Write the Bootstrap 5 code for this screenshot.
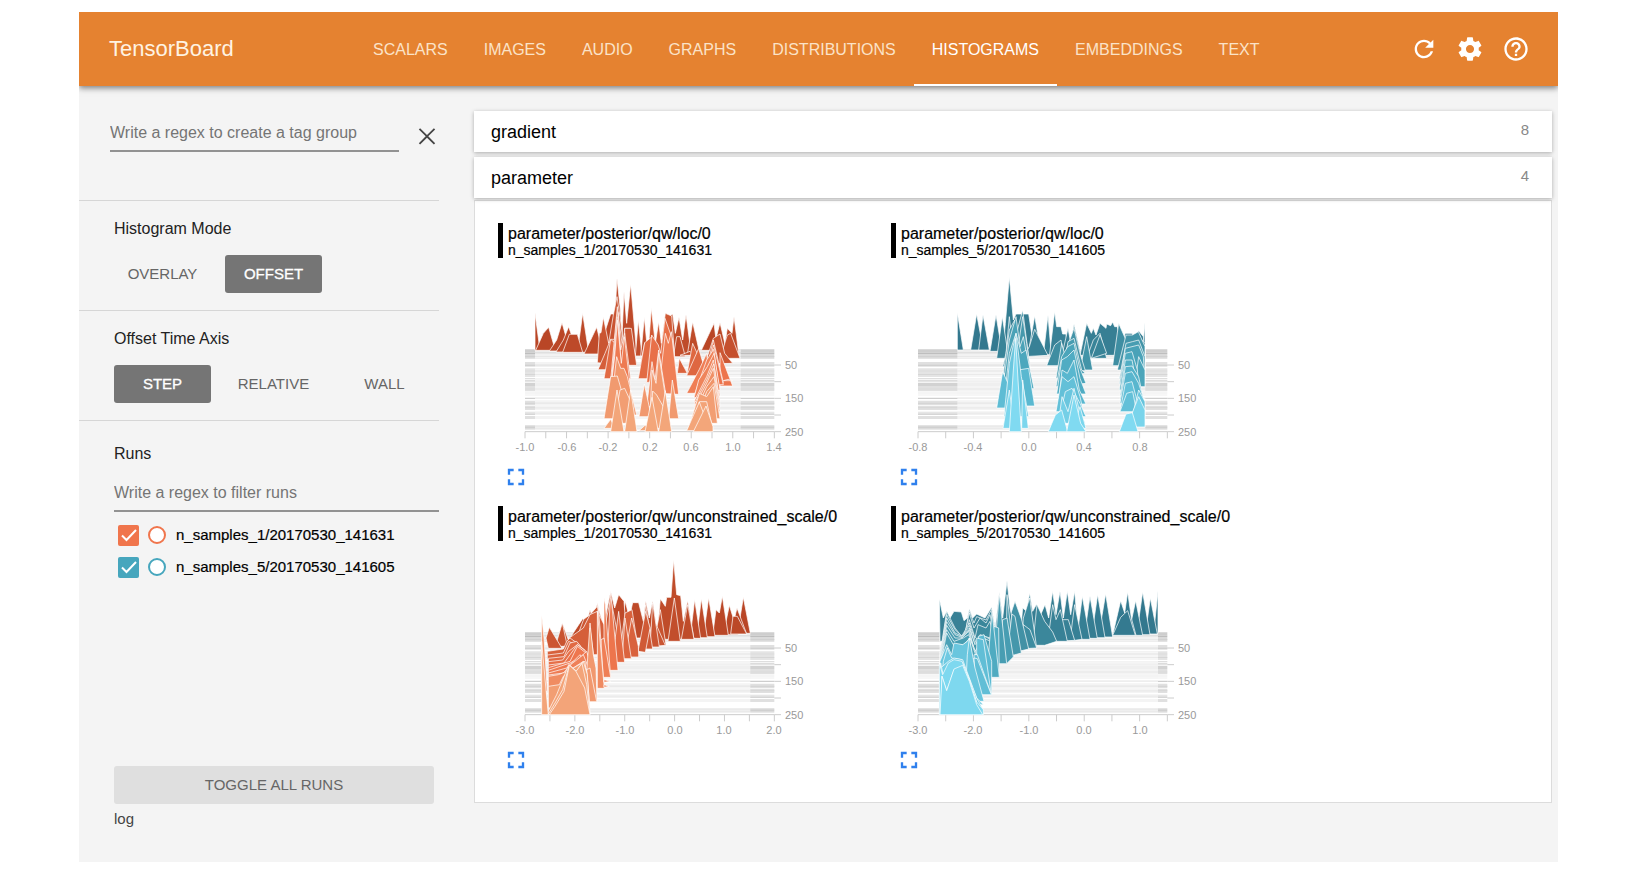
<!DOCTYPE html>
<html lang="en">
<head>
<meta charset="utf-8">
<meta name="viewport" content="width=device-width, initial-scale=1">
<title>TensorBoard</title>
<link href="https://cdn.jsdelivr.net/npm/bootstrap@5.3.0/dist/css/bootstrap.min.css" rel="stylesheet">
<style>
  body { font-family: "Liberation Sans", Arial, sans-serif; font-size: 16px; line-height: 24px; color: #222; background: #fff; padding: 12px 78px 14px 79px; }
  .app { min-height: calc(100vh - 26px); background: #f4f4f4; overflow: hidden; }
  .topbar { background: #e58230; min-height: 74px; padding: 0 28px 0 30px; box-shadow: 0 2px 6px rgba(0,0,0,.5); z-index: 2; }
  .topbar .brand { font-size: 22px; color: #fff3e2; width: 246px; text-decoration: none; }
  .tabs .nav-link { color: #fbe3c8; padding: 0 18px; height: 74px; line-height: 76px; border-radius: 0; }
  .tabs .nav-link.active { color: #fff; box-shadow: inset 0 -2px #fff; }
  .tools { gap: 18px; }
  .icon-btn { border: 0; padding: 0; background: none; color: #fff; line-height: 0; flex: none; }
  .icon-btn svg { width: 28px; height: 28px; fill: currentColor; }
  .side { width: 360px; flex: none; }
  .side section { border-bottom: 1px solid #d6d6d6; padding: 16px 0 17px 35px; }
  .side .tag-search { padding: 28px 0 48px 31px; }
  .side section.runs { border: 0; padding-top: 21px; }
  .side h2 { font-size: 16px; line-height: 24px; margin: 0; font-weight: 400; }
  .line-input { border: 0; border-bottom: 2px solid #929292; border-radius: 0; background: none; padding: 2px 0 0; height: 38px; width: 100%; color: #222; }
  .line-input::placeholder { color: #757575; opacity: 1; }
  .tag-search .line-input { width: 289px; flex: none; }
  .tag-search .icon-btn { color: #444; margin: 8px 0 0 14px; }
  .runs .line-input { margin: 8px 0 7px; }
  .modes { gap: 14px; margin-top: 14px; }
  .mode { width: 97px; height: 38px; padding: 0; font-size: 15px; color: #666; border-radius: 3px; border: 0; }
  .mode.active, .mode.active:hover { background: #757575 !important; color: #fff !important; -webkit-text-stroke: .3px #fff; }
  .run { height: 32px; padding-left: 4px; font-size: 15px; color: #000; }
  .run input { appearance: none; margin: 0; flex: none; }
  .run input[type=checkbox] { width: 21px; height: 21px; border-radius: 2px; background: var(--run) url("data:image/svg+xml,%3Csvg xmlns='http://www.w3.org/2000/svg' viewBox='0 0 21 21'%3E%3Cpath d='M4 10.500l4.500 4.500L18 5' fill='none' stroke='white' stroke-width='2'/%3E%3C/svg%3E") center / 21px; }
  .run input[type=radio] { width: 18px; height: 18px; border: 2px solid var(--run); border-radius: 50%; background: #fff; margin: 0 10px 0 9px; }
  .run label { -webkit-text-stroke: .2px #000; }
  .side-foot { padding: 0 5px 28px 35px; font-size: 15px; }
  .toggle-all { background: #dfdfdf; color: #666; border: 0; border-radius: 3px; height: 38px; padding: 0; font-size: 15px; }
  .side-foot div { line-height: 30px; color: #444; }
  .board { padding: 25px 6px 58px 35px; }
  .category { height: 41px; border: 0; background: #fff; color: #000; font-size: 18px; padding: 0 23px 0 17px; box-shadow: 0 1px 4px rgba(0,0,0,.3); }
  .category + .category { margin-top: 5px; }
  .category small { font-size: 15px; color: #888; padding-bottom: 4px; }
  .panel { background: #fff; border: 1px solid #dcdcdc; margin-top: 2px; padding: 22px 0 0 23px; min-height: 603px; }
  .plots { row-gap: 15px; }
  .plot-item { width: 393px; height: 268px; }
  .plot-head { border-left: 5px solid #000; height: 35px; padding: 2px 0 0 5px; color: #000; font-size: 16px; line-height: 17px; white-space: nowrap; }
  .plot-head div { -webkit-text-stroke: .2px #000; }
  .plot-head div + div { font-size: 14px; line-height: 16px; }
  .plot { display: block; width: 330px; height: 190px; margin-top: 10px; font-size: 11px; fill: #999; }
  .expand { color: #2f80ed; margin-left: 4px; margin-top: 5px; }
</style>
</head>
<body>
<div class="app d-flex flex-column">
  <header class="topbar d-flex align-items-center position-relative">
    <a class="brand" href="#">TensorBoard</a>
    <nav class="nav tabs flex-nowrap">
      <a class="nav-link" href="#">SCALARS</a>
      <a class="nav-link" href="#">IMAGES</a>
      <a class="nav-link" href="#">AUDIO</a>
      <a class="nav-link" href="#">GRAPHS</a>
      <a class="nav-link" href="#">DISTRIBUTIONS</a>
      <a class="nav-link active" href="#" aria-current="page">HISTOGRAMS</a>
      <a class="nav-link" href="#">EMBEDDINGS</a>
      <a class="nav-link" href="#">TEXT</a>
    </nav>
    <div class="tools d-flex ms-auto">
      <button class="icon-btn" type="button" aria-label="Refresh"><svg viewBox="0 0 24 24"><path d="M17.65 6.35C16.2 4.9 14.21 4 12 4c-4.420 0-7.990 3.580-7.990 8s3.570 8 7.990 8c3.730 0 6.840-2.550 7.730-6h-2.080c-.82 2.330-3.040 4-5.650 4-3.310 0-6-2.690-6-6s2.690-6 6-6c1.660 0 3.140.69 4.220 1.780L13 11h7V4l-2.350 2.350z"/></svg></button>
      <button class="icon-btn" type="button" aria-label="Settings"><svg viewBox="0 0 24 24"><path d="M19.430 12.980c.04-.32.07-.64.07-.98s-.03-.66-.07-.98l2.110-1.650c.19-.15.24-.42.12-.64l-2-3.460c-.12-.22-.39-.3-.61-.22l-2.490 1c-.52-.4-1.080-.73-1.690-.98l-.38-2.650C14.460 2.180 14.250 2 14 2h-4c-.25 0-.46.18-.49.42l-.38 2.650c-.61.25-1.170.59-1.690.98l-2.490-1c-.23-.09-.49 0-.61.22l-2 3.460c-.13.22-.07.49.12.64l2.110 1.650c-.04.32-.07.65-.07.98s.03.66.07.98l-2.110 1.650c-.19.15-.24.42-.12.64l2 3.460c.12.22.39.3.61.22l2.490-1c.52.4 1.080.73 1.690.98l.38 2.650c.03.24.24.42.49.42h4c.25 0 .46-.18.49-.42l.38-2.650c.61-.25 1.170-.59 1.690-.98l2.490 1c.23.09.49 0 .61-.22l2-3.460c.12-.22.07-.49-.12-.64l-2.110-1.650zM12 15.500c-1.930 0-3.500-1.570-3.500-3.500s1.570-3.500 3.500-3.500 3.500 1.570 3.500 3.500-1.570 3.500-3.500 3.500z"/></svg></button>
      <button class="icon-btn" type="button" aria-label="Help"><svg viewBox="0 0 24 24"><path d="M11 18h2v-2h-2v2zm1-16C6.480 2 2 6.480 2 12s4.480 10 10 10 10-4.480 10-10S17.520 2 12 2zm0 18c-4.410 0-8-3.590-8-8s3.590-8 8-8 8 3.590 8 8-3.590 8-8 8zm0-14c-2.210 0-4 1.790-4 4h2c0-1.100.9-2 2-2s2 .9 2 2c0 2-3 1.750-3 5h2c0-2.250 3-2.500 3-5 0-2.210-1.790-4-4-4z"/></svg></button>
    </div>
  </header>

  <div class="d-flex flex-grow-1">
    <aside class="side d-flex flex-column">
      <section class="tag-search d-flex align-items-start">
        <input class="line-input" type="text" placeholder="Write a regex to create a tag group" aria-label="Write a regex to create a tag group">
        <button class="icon-btn" type="button" aria-label="Clear"><svg viewBox="0 0 24 24"><path d="M19 6.410L17.900 5.300 12 11.200 6.100 5.300 5 6.410 10.900 12.300 5 18.200l1.100 1.100 5.900-5.900 5.900 5.900L19 18.200l-5.900-5.900z"/></svg></button>
      </section>
      <section>
        <h2>Histogram Mode</h2>
        <div class="modes d-flex">
          <button class="btn mode" type="button">OVERLAY</button>
          <button class="btn mode active" type="button">OFFSET</button>
        </div>
      </section>
      <section>
        <h2>Offset Time Axis</h2>
        <div class="modes d-flex">
          <button class="btn mode active" type="button">STEP</button>
          <button class="btn mode" type="button">RELATIVE</button>
          <button class="btn mode" type="button">WALL</button>
        </div>
      </section>
      <section class="runs">
        <h2>Runs</h2>
        <input class="line-input" type="text" placeholder="Write a regex to filter runs" aria-label="Write a regex to filter runs">
        <div class="run d-flex align-items-center" style="--run:#f0754c">
          <input type="checkbox" id="run1" checked><input type="radio" name="only" aria-label="Show only n_samples_1"><label for="run1">n_samples_1/20170530_141631</label>
        </div>
        <div class="run d-flex align-items-center" style="--run:#46a6bd">
          <input type="checkbox" id="run5" checked><input type="radio" name="only" aria-label="Show only n_samples_5"><label for="run5">n_samples_5/20170530_141605</label>
        </div>
      </section>
      <div class="side-foot mt-auto">
        <button class="toggle-all btn w-100" type="button">TOGGLE ALL RUNS</button>
        <div>log</div>
      </div>
    </aside>

    <main class="board flex-grow-1">
      <button class="category w-100 d-flex align-items-center justify-content-between" type="button"><span>gradient</span><small>8</small></button>
      <button class="category w-100 d-flex align-items-center justify-content-between position-relative" type="button"><span>parameter</span><small>4</small></button>
      <div class="panel">
        <div class="plots d-flex flex-wrap" id="plots"></div>
      </div>
    </main>
  </div>
</div>

<script src="https://cdn.jsdelivr.net/npm/bootstrap@5.3.0/dist/js/bootstrap.bundle.min.js"></script>
<script>
// Colour ramps from the oldest step (back) to the newest (front).
const ORANGE = [[420,185,70,38],[470,208,90,54],[530,238,118,78],[600,240,146,104],[665,243,166,122]];
const TEAL = [[420,51,120,142],[450,58,134,154],[490,70,152,172],[540,76,168,190],[590,92,186,210],[625,108,200,224],[665,128,218,241]];

// Each ridge is "baseline: x,y x,y ...". Units are thirds of a pixel.
const charts = [
  { title: 'parameter/posterior/qw/loc/0', run: 'n_samples_1/20170530_141631', ramp: ORANGE, x0: 24, y0: 174, data: [135, 752],
    ticks: 12, labels: ['-1.0','-0.6','-0.2','0.2','0.6','1.0','1.4'], ridges: `
421: 135,421 135,310 150,421
421: 137,421 160,370 176,352 196,421
423: 178,423 200,390 216,338 240,423
426: 198,426 220,390 236,350 262,426
427: 262,427 268,385 278,310 296,427
428: 218,427 238,373 262,373 278,427
431: 325,431 340,380 362,312 375,312 381,205 391,300 396,380 402,245 410,340 422,222 434,360 440,431
432: 282,432 320,352 340,432
438: 436,438 445,330 456,438
438: 452,438 463,322 474,438
438: 476,438 485,330 494,438
430: 498,430 506,345 514,430
434: 518,434 540,318 548,312 556,370 567,322 578,390 588,314 604,434
434: 592,434 608,336 630,434
421: 634,421 672,340 682,421
424: 668,424 690,338 710,424
430: 700,430 712,355 726,370 732,320 746,430
440: 550,440 560,380 570,380 586,440
436: 570,436 600,424 612,436
445: 690,445 712,375 722,370 750,445
458: 322,458 328,370 333,368 340,322 356,400 370,315 381,260 390,320 400,400 404,355 420,355 440,466 395,466
466: 404,466 404,355 424,355 440,466
479: 324,479 345,430 362,388 374,388 384,310 396,400 408,479
470: 450,470 464,398 474,430 484,295 496,400 506,335 514,400 526,310 545,318 556,470
462: 645,462 670,385 690,372 704,430 728,460
490: 562,490 568,445 592,490
497: 590,497 608,400 626,440 640,497
497: 590,497 626,415 650,497
506: 342,506 362,388 376,400 384,305 392,420 404,370 422,506
506: 445,506 464,398 486,380 504,440 506,506
510: 362,510 382,290 396,510
515: 364,515 381,320 396,515
518: 470,518 485,375 505,405 512,430 525,325 548,390 560,500
522: 364,522 382,350 396,522
528: 690,528 690,428 728,528
512: 700,512 714,508 728,512
518: 640,518 670,390 700,518
524: 640,524 671,405 700,524
530: 364,530 381,380 398,530
540: 362,540 374,440 382,330 394,460 403,380 422,540
550: 590,550 628,478 650,430 664,550
553: 505,550 526,370 535,400 544,365 566,553
558: 612,558 650,450 671,418 690,558
564: 612,564 626,510 652,470 672,430 690,540
575: 612,575 650,500 670,450 690,575
583: 612,583 650,510 671,462 690,583
590: 470,590 486,455 495,510 506,420 526,545 530,590
592: 612,592 650,520 670,475 690,592
605: 616,605 650,530 672,500 690,605
615: 360,615 380,440 392,475 402,475 412,500 440,615
620: 447,620 463,522 484,620
620: 480,620 486,480 498,520 506,430 524,545 535,620
626: 342,626 362,500 382,498 394,540 410,626
626: 620,626 650,545 672,520 690,626
626: 536,626 547,510 566,626
640: 372,640 390,540 404,535 420,570 436,640
640: 600,640 628,550 650,560 670,530 682,640
655: 342,655 362,628 375,655
655: 480,655 488,543 500,555 520,590 530,655
655: 610,655 628,575 650,575 668,655
662: 590,662 628,576 660,662
662: 447,662 466,645 480,662
665: 362,665 381,540 402,665
665: 404,665 422,540 441,665
665: 465,665 486,562 505,665
665: 506,665 526,542 545,665
665: 610,665 648,588 669,650 669,665` },
  { title: 'parameter/posterior/qw/loc/0', run: 'n_samples_5/20170530_141605', ramp: TEAL, x0: 33, y0: 174, data: [232, 796],
    ticks: 9, labels: ['-0.8','-0.4','0.0','0.4','0.8'], ridges: `
420: 232,420 232,308 250,420
420: 272,420 290,312 310,420
420: 296,420 309,315 328,420
424: 330,424 348,315 366,424
430: 368,430 376,340 388,202 400,330 408,312 446,312 464,430
434: 444,434 464,318 484,434
434: 490,434 504,316 514,434
445: 350,445 367,320 386,445
440: 430,440 448,410 464,358 504,436
440: 508,440 524,305 530,350 543,350 548,372 558,372 566,440
440: 545,440 564,355 580,440
445: 564,445 582,343 602,430
436: 600,436 620,340 634,370 640,355 648,375 660,340 678,355 680,342 692,347 698,336 704,350 712,350 730,436
436: 715,436 736,370 756,370 762,385 776,362 790,380 796,436
436: 786,436 795,338 795,436
445: 620,445 640,390 660,370 680,445
445: 634,445 660,375 680,430
465: 500,467 524,405 543,390 556,467
467: 698,467 716,340 740,395 776,380 795,400 795,467
470: 368,470 378,430 388,320 398,410 412,360 428,300 446,440 450,470
480: 600,480 620,380 638,480
480: 712,480 738,375 757,375 775,365 795,410 795,480
482: 540,482 564,405 582,355 600,430 616,482
490: 370,490 388,360 404,330 416,400 428,320 440,400 452,490
505: 528,505 545,400 556,440 564,395 582,385 605,480 616,490
506: 718,506 738,400 757,395 776,390 795,440 795,506
520: 370,520 388,390 408,320 420,410 430,380 448,480 458,520
522: 718,522 736,415 756,410 776,405 790,440 795,522
530: 528,530 545,440 563,410 582,400 598,470 618,520
530: 764,530 776,440 795,480 795,530
536: 376,536 388,430 408,370 424,430 438,420 462,536
540: 718,540 736,430 756,425 772,480 778,540
552: 530,552 545,450 562,440 582,420 600,505 618,552
556: 720,556 736,450 756,450 776,556
568: 720,568 736,470 756,468 776,500 790,568
585: 408,588 415,480 446,475 464,588
582: 535,582 546,480 562,490 582,450 598,540 618,582
580: 720,580 736,490 756,485 776,520 795,580
594: 350,594 368,485 384,520 396,594
605: 720,605 736,520 756,515 768,560 778,605
605: 528,605 546,500 564,515 582,500 600,560 610,605
605: 720,605 740,550 758,545 770,605
620: 372,620 388,460 408,370 424,500 446,620
620: 535,620 548,580 556,545 576,535 600,580 618,620
615: 758,615 776,540 795,575 795,615
640: 535,640 546,560 564,605 582,535 600,610 616,640
651: 742,651 760,600 776,560 795,600 795,651
655: 369,655 388,540 404,655
655: 425,655 428,510 445,655
665: 388,665 400,480 407,385 414,510 424,665
655: 580,655 600,590 618,655
665: 505,665 526,615 545,600 563,665
665: 560,665 582,555 602,640 618,665
665: 718,665 738,612 757,608 774,665` },
  { title: 'parameter/posterior/qw/unconstrained_scale/0', run: 'n_samples_1/20170530_141631', ramp: ORANGE, x0: 24, y0: 169, data: [155, 781],
    ticks: 10, labels: ['-3.0','-2.0','-1.0','0.0','1.0','2.0'], ridges: `
416: 740,416 750,370 760,308 781,416
418: 722,418 741,340 770,418
420: 700,420 718,332 745,420
422: 668,422 678,345 688,355 697,305 715,422
424: 722,418 729,365 742,365 770,418
426: 640,426 656,310 675,426
429: 620,429 634,312 652,429
431: 600,431 614,315 632,431
434: 500,434 511,312 526,335 530,308 543,308 551,195 560,300 572,303 580,380 593,318 612,434
430: 390,430 406,320 418,370 428,324 446,324 460,380 467,318 478,370 488,318 500,400 510,430
434: 574,434 593,330 612,434
440: 534,440 553,310 571,440
430: 240,430 278,372 290,385 300,345 310,380 322,326 340,400 362,290 374,340 386,300 402,320 410,430
452: 490,452 511,345 528,452
457: 470,457 490,370 526,452
457: 480,457 488,325 508,457
455: 215,455 217,385 240,450
455: 196,455 217,385 232,455
461: 175,461 168,430 178,398 216,461
463: 455,463 467,330 488,463
470: 444,470 467,350 480,400 466,473
485: 388,485 405,355 426,345 448,485
487: 404,487 425,370 445,455 446,487
492: 396,492 405,370 424,492
460: 238,460 262,425 281,374 300,360 322,335 344,400 362,310 385,430
480: 220,480 238,430 280,400 300,360 322,350 342,390 350,480
503: 366,503 386,350 404,503
527: 350,527 362,290 372,400 384,527
484: 172,484 172,470 220,463 230,440 240,430 268,450 290,484
494: 172,494 172,481 220,475 236,440 276,460 290,494
504: 175,504 175,491 222,486 240,445 260,440 284,470 300,504
514: 175,514 175,501 218,496 236,470 262,450 284,465 300,514
522: 175,522 175,511 222,505 262,450 288,470 310,522
530: 175,530 175,519 240,500 262,455 288,475 310,530
538: 175,538 175,527 240,505 268,490 290,470 310,538
546: 175,546 175,535 230,520 240,510 270,480 300,546
550: 342,548 342,310 346,330 362,548
550: 330,548 333,435 342,430 362,548
556: 175,556 175,541 220,535 242,510 280,480 310,556
580: 322,581 324,330 330,400 342,580
581: 322,581 322,350 343,581
585: 175,585 175,545 205,540 218,535 242,525 280,500 310,585
555: 342,555 362,560 342,563
572: 342,570 358,575 342,578
590: 155,590 155,360 162,430 172,590
620: 300,620 300,400 310,475 320,620
621: 284,621 300,385 310,480 318,520 321,621
640: 175,640 175,575 208,570 220,545 250,520 285,500 300,640
621: 298,621 290,525 300,520 320,621
655: 172,655 200,600 236,510 260,530 280,500 292,540 300,655
660: 155,660 155,440 162,520 175,660
660: 174,660 195,625 218,585 238,510 258,530 276,506 290,570 300,660
660: 178,660 195,635 222,590 238,512 258,530 284,580 300,660` },
  { title: 'parameter/posterior/qw/unconstrained_scale/0', run: 'n_samples_5/20170530_141605', ramp: TEAL, x0: 33, y0: 169, data: [178, 834],
    ticks: 9, labels: ['-3.0','-2.0','-1.0','0.0','1.0'], ridges: `
416: 815,416 824,385 834,290 834,416
418: 796,418 811,310 832,418
420: 770,420 788,292 810,420
422: 745,422 767,318 788,422
422: 698,422 722,318 734,355 743,292 754,370 768,422
424: 698,422 722,368 743,348 766,422
427: 655,427 677,298 698,427
429: 634,429 653,300 675,429
431: 612,431 630,305 652,431
430: 420,430 428,340 440,350 449,295 458,350 470,328 482,360 495,330 506,370 518,290 528,360 540,290 550,370 562,290 572,360 584,290 596,430
434: 590,434 607,305 630,434
437: 570,437 584,330 606,434 584,437
440: 530,440 546,375 565,375 584,437
440: 494,440 506,420 518,330 528,375 541,345 562,440
452: 458,452 471,330 494,380 518,412 530,440 494,452
460: 425,460 430,370 449,310 470,460
463: 410,463 430,390 450,405 470,460
475: 396,475 388,370 405,320 425,375 446,463
440: 340,440 348,380 358,292 368,370 381,258 390,340 402,400
440: 180,440 178,312 190,370 200,350 210,370 222,350 244,352 252,378 262,370 268,342 278,370 290,358 315,370 335,338 352,440
444: 250,444 268,348 282,385 290,366 318,376 335,344 350,444
450: 248,450 268,355 282,400 300,370 318,385 330,360 350,450
465: 250,465 268,375 285,430 294,390 318,400 330,380 350,465
487: 378,487 381,300 402,487
487: 380,487 396,358 405,365 424,475
507: 358,507 368,375 381,370 400,487 380,507
507: 340,507 358,300 380,507
480: 180,480 200,350 225,400 245,425 268,385 290,450 300,420 330,430 350,480
485: 180,485 200,360 225,405 246,425 268,392 290,470
490: 180,490 200,370 225,415 246,425 268,400 285,450 310,422 332,435 345,490
495: 180,495 200,381 225,420 246,428 268,405 285,480
500: 180,500 200,392 225,430 246,430 266,410 285,470 310,430 332,440 350,500
548: 337,548 337,430 342,395 356,400 358,548
548: 320,548 336,350 358,548
510: 180,510 200,405 222,440 250,430 266,420 290,480
520: 180,520 200,415 220,450 250,450 270,430 290,490
590: 300,590 295,425 312,420 335,500 335,600
600: 290,600 290,430 310,435 334,600
600: 288,600 282,480 292,480 334,600
600: 285,600 282,490 292,492 334,600
620: 180,620 180,500 200,450 215,480 222,445 248,450 262,440 268,430 278,500 300,620
620: 255,620 262,480 268,430 285,520 312,620
630: 180,630 190,500 202,460 215,490 245,495 290,610 310,630
640: 180,640 182,520 205,500 222,490 248,495 290,610 310,645
660: 178,660 182,505 198,580 222,525 248,505 268,555 290,625 310,660
660: 178,660 178,505 188,540 205,505 222,495 246,500 268,555 290,622 310,645 310,660 260,660 248,520 222,525 200,588 186,545 182,660
660: 180,660 186,545 200,588 222,523 248,512 268,560 290,630 308,660` }
];

// Step lines behind the ridges: [top, height, grey level].
const stripes = [[0,10,206],[10,4,190],[14,14,218],[20,2,206],[38,14,224],[46,3,204],[57,26,228],[64,2,212],[74,2,210],[86,3,222],[91,6,220],[100,10,210],[110,16,224],[118,2,212],[130,2,216],[136,2,224],[145,4,206],[154,14,224],[160,3,210],[170,12,224],[174,3,214],[187,3,222],[192,5,214],[200,9,224],[228,5,218],[232,6,208],[240,2,226]];

const colour = (ramp, b) => {
  let i = 0;
  while (i < ramp.length - 2 && b > ramp[i + 1][0]) i++;
  const [p, q] = [ramp[i], ramp[i + 1]];
  const t = Math.min(1, Math.max(0, (b - p[0]) / (q[0] - p[0])));
  return `rgb(${[1, 2, 3].map(k => Math.round(p[k] + t * (q[k] - p[k]))).join()})`;
};

document.getElementById('plots').innerHTML = charts.map(c => {
  const L = c.x0 + 81, R = L + 748, T = c.y0 + 244, B = c.y0 + 491;
  const bands = stripes.map(([y, h, g]) => {
    const light = Math.round(255 - (255 - g) * .35);
    return `<path fill="rgb(${g},${g},${g})" d="M${L} ${T + y}H${R}v${h}H${L}z"/><path fill="rgb(${light},${light},${light})" d="M${c.data[0]} ${T + y}H${c.data[1]}v${h}H${c.data[0]}z"/>`;
  }).join('');
  const hills = c.ridges.trim().split('\n').map(r => {
    const [b, pts] = r.split(': ');
    return `<polygon points="${pts}" fill="${colour(c.ramp, +b)}"/>`;
  }).join('');
  const last = c.ticks;
  let ticks = '';
  for (let i = 0; i <= last; i++) ticks += `M${L + 748 * i / last} ${B}v20`;
  for (let i = 0; i < 5; i++) ticks += `M${R} ${c.y0 + 291 + 50 * i}h20`;
  const xs = c.labels.map((t, i) => `<text x="${Math.round(27 + 249.33 * 2 * i / last)}" y="183" text-anchor="middle">${t}</text>`).join('');
  const ys = [50, 150, 250].map((t, i) => `<text x="287" y="${[101, 134, 168][i]}">${t}</text>`).join('');
  return `<article class="plot-item">
    <div class="plot-head"><div>${c.title}</div><div>${c.run}</div></div>
    <svg class="plot" viewBox="0 0 330 190" role="img" aria-label="${c.title}">
      <svg width="330" height="190" viewBox="${c.x0} ${c.y0} 990 570">
        ${bands}<path d="M${L} ${B}H${R}${ticks}" stroke="#ccc" stroke-width="3" fill="none"/>
        <g stroke="#fff" stroke-opacity=".7" stroke-width="3" stroke-linejoin="bevel">${hills}</g>
      </svg>${xs}${ys}
    </svg>
    <button class="icon-btn expand" type="button" aria-label="Expand"><svg viewBox="0 0 24 24"><path d="M5 10V5h5v2H7v3zM14 5h5v5h-2V7h-3zM19 14v5h-5v-2h3v-3zM10 19H5v-5h2v3h3z"/></svg></button>
  </article>`;
}).join('');
</script>
</body>
</html>
